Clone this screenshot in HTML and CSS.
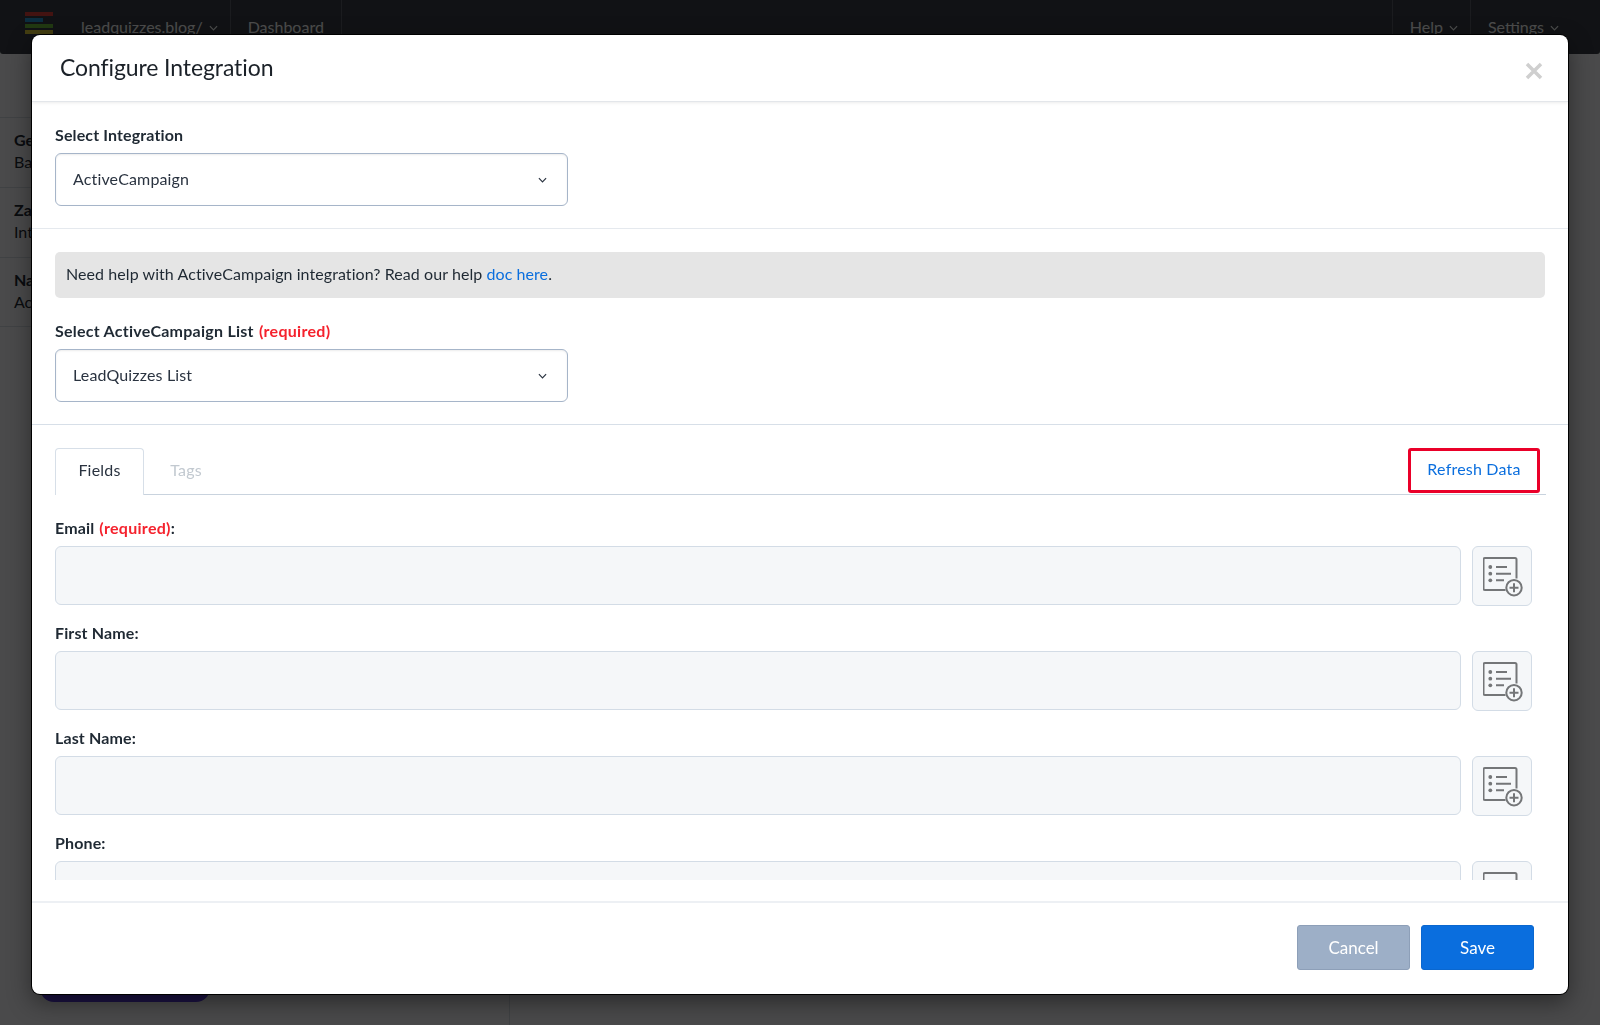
FILE: index.html
```html
<!DOCTYPE html>
<html lang="en">
<head>
<meta charset="utf-8">
<title>Configure Integration</title>
<link rel="stylesheet" href="styles.css">
</head>
<body>
<div class="app">
  <header class="topbar">
    <div class="logo"><i class="b1"></i><i class="b2"></i><i class="b3"></i><i class="b4"></i></div>
    <div class="nav-item site">leadquizzes.blog/ <svg class="chev" viewBox="0 0 10 6"><path d="M1 1l4 4 4-4"/></svg></div>
    <div class="nav-item dash">Dashboard</div>
    <div class="spacer"></div>
    <div class="nav-item">Help <svg class="chev" viewBox="0 0 10 6"><path d="M1 1l4 4 4-4"/></svg></div>
    <div class="nav-item">Settings <svg class="chev" viewBox="0 0 10 6"><path d="M1 1l4 4 4-4"/></svg></div>
  </header>
  <div class="main">
    <aside class="side">
      <div class="side-row"><b>Ge</b><span>Ba</span></div>
      <div class="side-row"><b>Za</b><span>Int</span></div>
      <div class="side-row"><b>Na</b><span>Ac</span></div>
      <div class="side-btn"></div>
    </aside>
  </div>
</div>
<div class="overlay"></div>
<section class="modal">
  <div class="modal-head">
    <h1>Configure Integration</h1>
    <svg class="close" viewBox="0 0 18 18"><path d="M2 2l14 14M16 2L2 16"/></svg>
  </div>
  <div class="block first">
    <label class="lbl">Select Integration</label>
    <div class="select"><span>ActiveCampaign</span><svg class="chev" viewBox="0 0 10 6"><path d="M1 1l4 4 4-4"/></svg></div>
  </div>
  <div class="block second">
    <div class="alert">Need help with ActiveCampaign integration? Read our help <a>doc here</a>.</div>
    <label class="lbl wide">Select ActiveCampaign List <em>(required)</em></label>
    <div class="select"><span>LeadQuizzes List</span><svg class="chev" viewBox="0 0 10 6"><path d="M1 1l4 4 4-4"/></svg></div>
  </div>
  <div class="fields-wrap">
    <div class="tabs">
      <div class="tab active">Fields</div>
      <div class="tab">Tags</div>
      <div class="spacer"></div>
      <div class="refresh">Refresh Data</div>
    </div>
    <div class="field">
      <label class="lbl">Email <em>(required)</em>:</label>
      <div class="field-row"><div class="input"></div><div class="add"><svg viewBox="0 0 40 40"><use href="#list-add"/></svg></div></div>
    </div>
    <div class="field">
      <label class="lbl">First Name:</label>
      <div class="field-row"><div class="input"></div><div class="add"><svg viewBox="0 0 40 40"><use href="#list-add"/></svg></div></div>
    </div>
    <div class="field">
      <label class="lbl">Last Name:</label>
      <div class="field-row"><div class="input"></div><div class="add"><svg viewBox="0 0 40 40"><use href="#list-add"/></svg></div></div>
    </div>
    <div class="field">
      <label class="lbl">Phone:</label>
      <div class="field-row"><div class="input"></div><div class="add"><svg viewBox="0 0 40 40"><use href="#list-add"/></svg></div></div>
    </div>
  </div>
  <div class="modal-foot">
    <button class="btn cancel">Cancel</button>
    <button class="btn save">Save</button>
  </div>
</section>
<svg class="defs" width="0" height="0">
  <symbol id="list-add" viewBox="0 0 40 40">
    <path class="ic" d="M22.500 33H2a1.500 1.500 0 0 1-1.500-1.500V2.500A1.500 1.500 0 0 1 2 1h30a1.500 1.500 0 0 1 1.500 1.500V21.500"/>
    <circle class="ic-fill" cx="7.300" cy="10" r="1.900"/>
    <circle class="ic-fill" cx="7.300" cy="16.700" r="1.900"/>
    <circle class="ic-fill" cx="7.300" cy="23.300" r="1.900"/>
    <path class="ic" d="M13 10h11M13 16.700h15M13 23.300h8"/>
    <circle class="ic" cx="31" cy="30.700" r="7.700"/>
    <path class="ic" d="M31 26.200v9M26.500 30.700h9"/>
  </symbol>
</svg>
</body>
</html>
```
FILE: styles.css
```css
* { box-sizing: border-box; }
html, body { margin: 0; height: 100%; }
body { font-family: Lato, "Noto Sans", sans-serif; color: #1f2933; background: #f8f9fc; overflow: hidden; }
.app { height: 1025px; display: flex; flex-direction: column; }
.topbar { height: 54px; background: #393f46; display: flex; color: #fff; font-size: 16px; border-radius: 0 0 3px 3px; padding-right: 29px; }
.logo { width: 56px; margin-left: 25px; padding-top: 12px; display: flex; flex-direction: column; gap: 2px; }
.logo i { display: block; height: 4px; width: 28px; }
.logo .b1 { background: #e2403a; }
.logo .b2 { background: #2b9bd8; width: 18px; }
.logo .b3 { background: #6fbf3f; }
.logo .b4 { background: #e3cf3a; }
.nav-item { padding: 17px 12px 0 17px; border-left: 1px solid #5a6068; display: flex; align-items: flex-start; gap: 6px; line-height: 20px; white-space: nowrap; }
.nav-item.site { border-left: 0; padding: 17px 12px 0 0; }
.nav-item.dash { border-right: 1px solid #5a6068; padding-right: 17px; }
.chev { width: 9px; height: 6px; fill: none; stroke: currentColor; stroke-width: 1.300; }
.nav-item .chev { margin-top: 8px; }
.spacer { flex: 1; }
.main { flex: 1; display: flex; }
.side { width: 510px; border-right: 1px solid #d8dde3; background: #f8f9fc; padding-top: 63px; display: flex; flex-direction: column; }
.side-row { height: 70px; border-top: 1px solid #d8dde3; padding: 11px 14px; display: flex; flex-direction: column; font-size: 16px; line-height: 22px; }
.side-row:nth-child(3) { border-bottom: 1px solid #d8dde3; }
.side-btn { margin: auto 0 23px 40px; width: 170px; height: 60px; background: #5a3ce0; border-radius: 14px; }
.overlay { position: fixed; inset: 0; background: rgba(0,0,0,.7); }
.modal { position: absolute; left: 32px; top: 35px; width: 1536px; height: 959px; background: #fff; border-radius: 8px; box-shadow: 0 0 0 1px #000, 0 8px 24px rgba(0,0,0,.45); display: flex; flex-direction: column; }
.modal-head { height: 67px; display: flex; align-items: center; justify-content: space-between; padding: 0 25px 2px 28px; border-bottom: 1px solid #e3e6ea; box-shadow: 0 1px 3px rgba(0,0,0,.08); flex: none; }
.modal-head h1 { margin: 0; font-size: 23px; letter-spacing: -.1px; font-weight: 400; color: #1b2128; }
.close { width: 18px; height: 18px; margin-top: 8px; fill: none; stroke: #cfcfcf; stroke-width: 3.500; }
.block { padding: 0 23px; border-bottom: 1px solid #e5e9ee; flex: none; }
.block.first { height: 127px; padding-top: 23px; }
.block.second { height: 196px; padding-top: 23px; border-bottom-color: #d7dfe8; }
.lbl { display: block; font-size: 16px; letter-spacing: .13px; font-weight: 700; line-height: 20px; color: #1f2933; }
.lbl.wide { letter-spacing: .25px; }
.lbl em { font-style: normal; color: #f5222d; font-weight: 700; margin-left: 1px; letter-spacing: .3px; }
.select { width: 513px; height: 53px; margin-top: 8px; border: 1px solid #a6b5c9; border-radius: 6px; display: flex; align-items: center; justify-content: space-between; padding: 0 20px 3px 17px; font-size: 16px; letter-spacing: .15px; color: #2a3340; box-shadow: inset 0 1px 2px rgba(0,0,0,.08); }
.select .chev { margin-top: 3px; }
.alert { height: 46px; background: #e5e5e5; border-radius: 5px; padding: 0 11px; line-height: 44px; font-size: 16px; letter-spacing: .07px; margin-bottom: 23px; white-space: pre; }
.alert a { color: #0a6ede; }
.fields-wrap { height: 455px; overflow: hidden; padding: 23px 22px 0 23px; flex: none; margin-bottom: 21px; }
.tabs { height: 47px; display: flex; border-bottom: 1px solid #c9d3de; margin-bottom: 23px; }
.tab { width: 84px; height: 47px; display: flex; align-items: center; justify-content: center; font-size: 16px; letter-spacing: .2px; color: #c2c9d0; padding-bottom: 5px; }
.tab.active { width: 89px; color: #2a3340; background: #fff; border: 1px solid #d7dfe8; border-bottom: 0; border-radius: 4px 4px 0 0; }
.refresh { width: 132px; height: 45px; margin: 0 6px 0 0; border: 3px solid #ea0029; border-radius: 3px; display: flex; align-items: center; justify-content: center; color: #0a6ede; font-size: 16px; letter-spacing: .2px; padding-bottom: 4px; }
.field { margin-bottom: 17px; }
.field-row { display: flex; gap: 11px; margin-top: 8px; }
.input { width: 1406px; height: 59px; background: #f5f7f9; border: 1px solid #d3dce6; border-radius: 6px; }
.add { width: 60px; height: 60px; background: #f5f7f9; border: 1px solid #d3dce6; border-radius: 6px; display: flex; align-items: center; justify-content: center; padding: 2px 0 0 2px; }
.add svg { width: 40px; height: 40px; }
.ic { fill: none; stroke: #747678; stroke-width: 2; }
.ic-fill { fill: #747678; }
.modal-foot { flex: 1; border-top: 2px solid #edf0f4; display: flex; justify-content: flex-end; gap: 11px; padding: 22px 34px 0 0; }
.btn { width: 113px; height: 45px; border-radius: 3px; font: 400 17px Lato, "Noto Sans", sans-serif; color: #fff; border: 1px solid transparent; }
.cancel { background: #9dafc7; border-color: #8d9fb8; }
.save { background: #0a6ede; border-color: #0a67cf; }
.defs { position: absolute; }
```
